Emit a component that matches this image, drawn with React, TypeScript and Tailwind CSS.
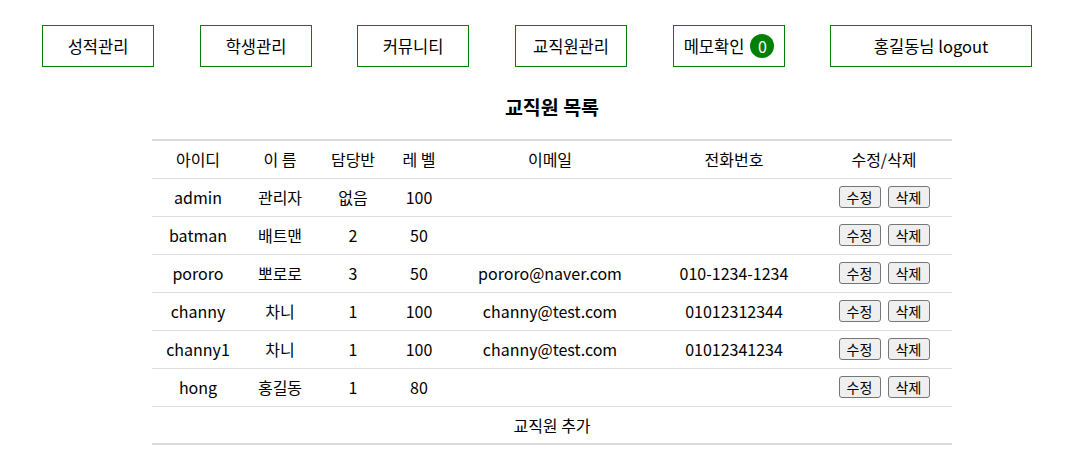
const menus = [
  { label: '성적관리', ml: 'ml-[42px]' },
  { label: '학생관리', ml: 'ml-[46px]' },
  { label: '커뮤니티', ml: 'ml-[45px]' },
  { label: '교직원관리', ml: 'ml-[46px]' },
]

const staff = [
  { id: 'admin', name: '관리자', cls: '없음', level: '100', email: '', phone: '' },
  { id: 'batman', name: '배트맨', cls: '2', level: '50', email: '', phone: '' },
  { id: 'pororo', name: '뽀로로', cls: '3', level: '50', email: 'pororo@naver.com', phone: '010-1234-1234' },
  { id: 'channy', name: '차니', cls: '1', level: '100', email: 'channy@test.com', phone: '01012312344' },
  { id: 'channy1', name: '차니', cls: '1', level: '100', email: 'channy@test.com', phone: '01012341234' },
  { id: 'hong', name: '홍길동', cls: '1', level: '80', email: '', phone: '' },
]

const navBtn = 'h-[42px] border border-[#008000] flex items-center justify-center text-[16.5px] text-black shrink-0'
const smallBtn = 'w-[42px] h-[22px] text-[14px] leading-none bg-[#efefef] border border-[#767676] rounded-[3px] text-black'

export default function App() {
  return (
    <div className="w-[1089px] h-[469px] bg-white text-black font-['Noto_Sans_CJK_KR','Noto_Sans',sans-serif]">
      <nav className="flex pt-[25px]">
        {menus.map((m) => (
          <a key={m.label} className={`${navBtn} w-[112px] ${m.ml}`}>{m.label}</a>
        ))}
        <a className={`${navBtn} w-[112px] gap-[6px] ml-[46px]`}>
          메모확인
          <span className="w-[24px] h-[24px] rounded-full bg-[#008000] text-white flex items-center justify-center text-[16px]">0</span>
        </a>
        <a className={`${navBtn} w-[202px] ml-[45px]`}>홍길동님 logout</a>
      </nav>

      <h2 className="text-center font-bold text-[19.5px] mt-[26px] mb-[18px] leading-[28px] pl-[15px]">교직원 목록</h2>

      <table className="ml-[152px] w-[800px] border-collapse text-[16px] text-center">
        <colgroup>
          <col className="w-[92px]" />
          <col className="w-[72px]" />
          <col className="w-[74px]" />
          <col className="w-[58px]" />
          <col className="w-[204px]" />
          <col className="w-[164px]" />
          <col className="w-[136px]" />
        </colgroup>
        <thead>
          <tr className="h-[38px] border-t-2 border-b border-[#dddddd]">
            <th className="font-normal">아이디</th>
            <th className="font-normal">이 름</th>
            <th className="font-normal">담당반</th>
            <th className="font-normal">레 벨</th>
            <th className="font-normal">이메일</th>
            <th className="font-normal">전화번호</th>
            <th className="font-normal">수정/삭제</th>
          </tr>
        </thead>
        <tbody>
          {staff.map((s) => (
            <tr key={s.id} className="h-[38px] border-b border-[#dddddd]">
              <td>{s.id}</td>
              <td>{s.name}</td>
              <td>{s.cls}</td>
              <td>{s.level}</td>
              <td>{s.email}</td>
              <td>{s.phone}</td>
              <td>
                <div className="flex justify-center gap-[7px]">
                  <button className={smallBtn}>수정</button>
                  <button className={smallBtn}>삭제</button>
                </div>
              </td>
            </tr>
          ))}
          <tr className="h-[38px] border-b-2 border-[#dddddd]">
            <td colSpan={7}>교직원 추가</td>
          </tr>
        </tbody>
      </table>
    </div>
  )
}
